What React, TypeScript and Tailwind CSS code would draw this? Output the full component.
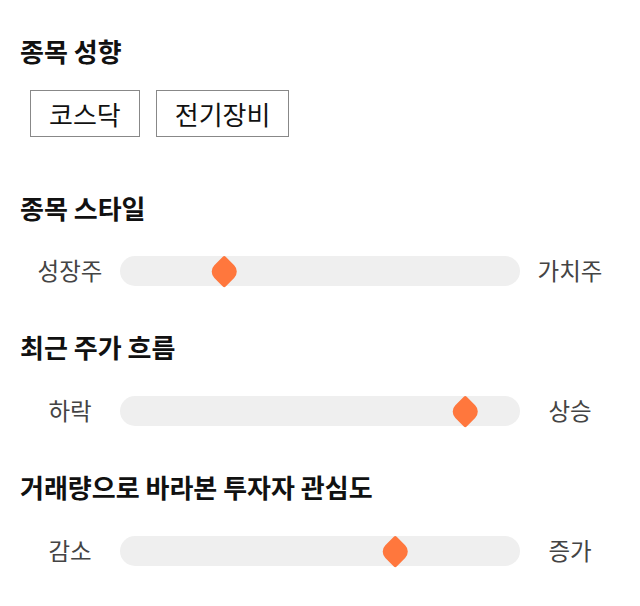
const font = "font-['Noto_Sans_CJK_KR','Noto_Sans',sans-serif]";

const Heading = ({ children, className = "" }: { children: string; className?: string }) => (
  <h2 className={`text-[26px] leading-[30px] font-bold text-[#111] ${className}`}>{children}</h2>
);

const Slider = ({ left, right, value, className = "" }: { left: string; right: string; value: number; className?: string }) => (
  <div className={`flex items-center h-[30px] ${className}`}>
    <span className="w-[100px] text-center text-[23.5px] text-[#444]">{left}</span>
    <div className="relative flex-1 h-[30px] rounded-full bg-[#efefef]">
      <div className="absolute inset-y-0 left-[12px] right-[12px]">
        <div
          className="absolute top-0 w-[24px] h-[30px] -ml-[12px] flex items-center justify-center"
          style={{ left: `${value}%` }}
        >
          <div className="w-[22.5px] h-[22.5px] shrink-0 bg-[#ff773d] rounded-tr-[9px] rounded-bl-[9px] rounded-tl-[2px] rounded-br-[2px] rotate-45" />
        </div>
      </div>
    </div>
    <span className="w-[100px] text-center text-[23.5px] text-[#444]">{right}</span>
  </div>
);

export default function App() {
  return (
    <div className={`${font} w-[640px] h-[606px] bg-white px-5 pt-[36px]`}>
      <Heading>종목 성향</Heading>
      <div className="flex gap-4 ml-[10px] mt-[24px]">
        {["코스닥", "전기장비"].map((t) => (
          <div key={t} className="h-[47px] px-[18px] flex items-center border border-[#888] text-[26px] text-[#111]">
            {t}
          </div>
        ))}
      </div>
      <Heading className="mt-[56px]">종목 스타일</Heading>
      <Slider className="mt-[33px]" left="성장주" right="가치주" value={24.5} />
      <Heading className="mt-[46px]">최근 주가 흐름</Heading>
      <Slider className="mt-[34px]" left="하락" right="상승" value={88.5} />
      <Heading className="mt-[46px]">거래량으로 바라본 투자자 관심도</Heading>
      <Slider className="mt-[34px]" left="감소" right="증가" value={70} />
    </div>
  );
}
